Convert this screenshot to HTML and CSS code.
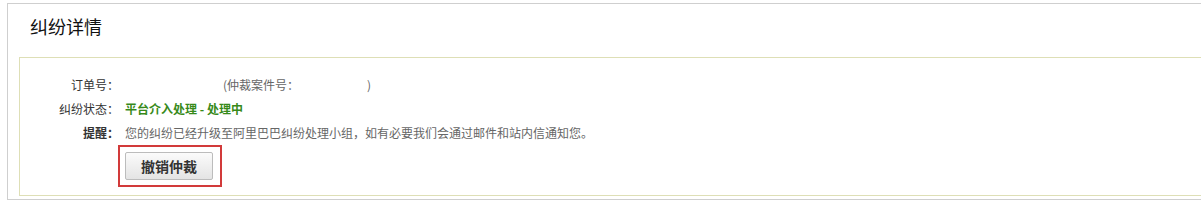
FILE: index.html
```html
<!DOCTYPE html>
<html>
    <head>
        <meta charset="utf-8">
        <link rel="stylesheet" href="styles.css">
    </head>
    <body>
        <div class="panel">
            <h2 class="panel-title">纠纷详情</h2>
            <div class="detail">
                <div class="row">
                    <span class="label">订单号：</span>
                    <span class="value">
                        <span class="masked order-no"></span>
                        <span class="muted">(仲裁案件号：</span><span class="masked case-no"></span><span class="muted">)</span>
                    </span>
                </div>
                <div class="row">
                    <span class="label">纠纷状态：</span>
                    <span class="value status">平台介入处理 - 处理中</span>
                </div>
                <div class="row">
                    <span class="label strong">提醒：</span>
                    <span class="value muted">您的纠纷已经升级至阿里巴巴纠纷处理小组，如有必要我们会通过邮件和站内信通知您。</span>
                </div>
                <div class="actions">
                    <div class="highlight">
                        <button class="btn">撤销仲裁</button>
                    </div>
                </div>
            </div>
        </div>
    </body>
</html>
```

FILE: styles.css
```css
body{
    margin:0;
    overflow:hidden;
    font-family:"Noto Sans CJK SC", "Liberation Sans", sans-serif;
    font-size:12px;
    color:#333;
    background:#fff;
}
.panel{
    margin:3px 0 0 7px;
    width:1230px;
    border:1px solid #cfcfcf;
    padding-bottom:3px;
}
.panel-title{
    margin:0 0 19px 0;
    padding:10px 0 0 22px;
    font-size:18px;
    line-height:24px;
    font-weight:normal;
    color:#111;
}
.detail{
    margin-left:11px;
    border:1px solid #dedfb6;
    padding:15px 0 8px 0;
}
.row{
    display:flex;
    line-height:24px;
    height:24px;
}
.label{
    width:99px;
    text-align:right;
    flex-shrink:0;
}
.strong{
    font-weight:bold;
}
.value{
    padding-left:6px;
    display:flex;
    align-items:center;
}
.masked{
    display:inline-block;
    height:14px;
}
.order-no{
    width:98px;
}
.case-no{
    width:68px;
}
.muted{
    color:#666;
}
.status{
    color:#378a1a;
    font-weight:bold;
}
.actions{
    padding:0 0 0 98px;
}
.highlight{
    display:inline-block;
    border:2px solid #d23a3a;
    padding:5px 7px 5px 5px;
}
.btn{
    display:block;
    width:88px;
    height:28px;
    border:1px solid #bcbcbc;
    border-radius:2px;
    background:linear-gradient(#fbfbfb, #e4e4e4);
    font-family:"Noto Sans CJK SC", sans-serif;
    font-size:14px;
    font-weight:bold;
    color:#333;
    padding:0;
}
```
